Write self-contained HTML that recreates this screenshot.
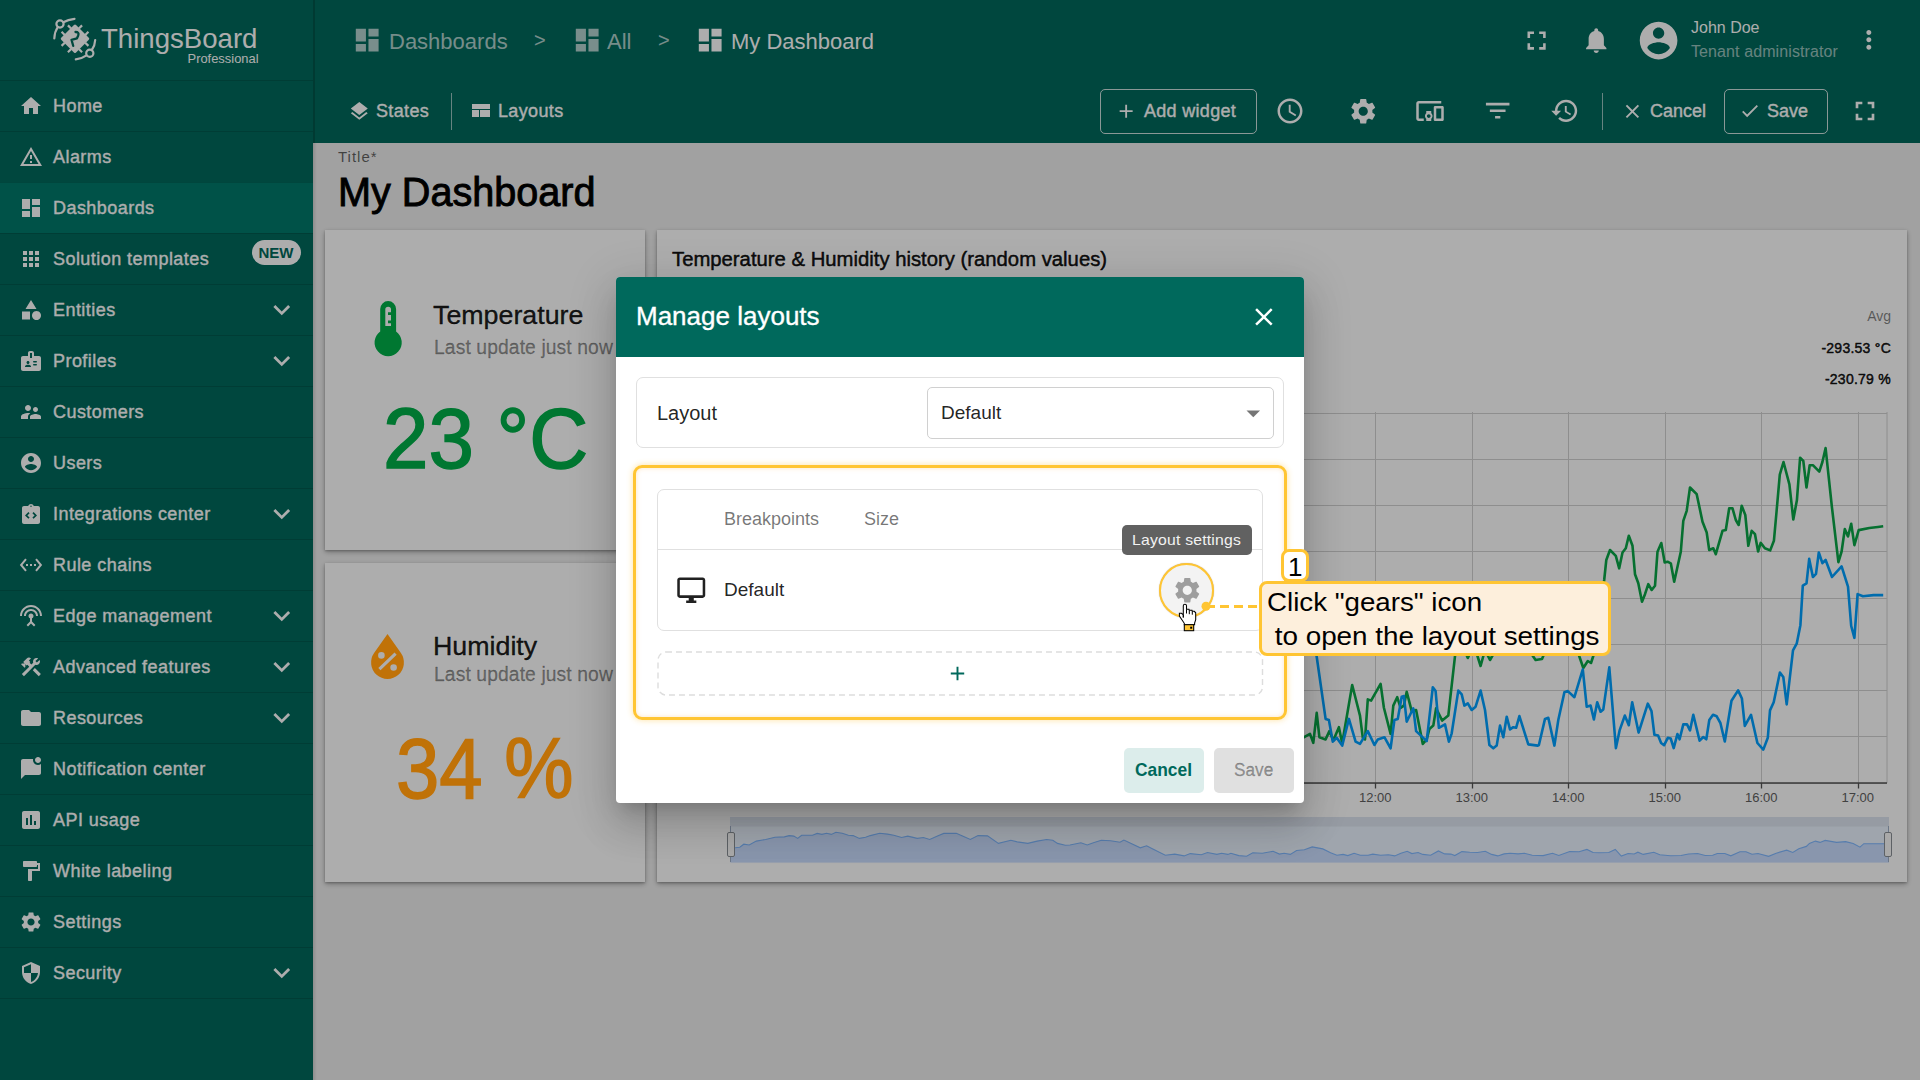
<!DOCTYPE html>
<html><head><meta charset="utf-8">
<style>
*{box-sizing:border-box}
html,body{margin:0;padding:0;width:1920px;height:1080px;overflow:hidden;font-family:"Liberation Sans",sans-serif;background:#eeeeee}
.abs{position:absolute}
svg{display:block}
#sidebar{position:absolute;left:0;top:0;width:313px;height:1080px;background:#00695c}
.mi{position:absolute;left:0;width:313px;height:51px;border-top:1px solid rgba(0,0,0,0.13)}
.mi .ic{position:absolute;left:20px;top:12px;width:24px;height:24px;fill:#fff}
.mi .tx{position:absolute;left:53px;top:14px;font-size:18px;color:#fff;white-space:nowrap;letter-spacing:0.2px}
.mi .chev{position:absolute;left:270px;top:13px;width:26px;height:26px;fill:#fff}
#header{position:absolute;left:313px;top:0;width:1607px;height:143px;background:#00695c}
.wt{color:#fff;white-space:nowrap;position:absolute}
#content{position:absolute;left:313px;top:143px;width:1607px;height:937px;background:#eeeeee}
.card{position:absolute;background:#fff;box-shadow:0 2px 5px rgba(0,0,0,0.3),0 1px 2px rgba(0,0,0,0.2)}
#overlay{position:absolute;left:0;top:0;width:1920px;height:1080px;background:rgba(0,0,0,0.32)}
#dialog{position:absolute;left:616px;top:277px;width:688px;height:526px;background:#fff;border-radius:4px;overflow:hidden;box-shadow:0 11px 15px -7px rgba(0,0,0,.17),0 24px 38px 3px rgba(0,0,0,.12),0 9px 46px 8px rgba(0,0,0,.1)}
</style></head><body>

<div id="sidebar">
<svg class="abs" style="left:0;top:0" width="313" height="80" viewBox="0 0 313 80">
<g fill="none" stroke="#fff" stroke-width="2.2" stroke-linecap="round">
<circle cx="60" cy="24" r="3.6"/>
<path d="M63.3 22.3 Q68 19.5 74.5 18.8"/>
<path d="M57.8 27 Q54.5 32 54.3 38.5"/>
<circle cx="89.8" cy="53.2" r="3.6"/>
<path d="M91.8 50 Q95 45.5 95.2 40"/>
<path d="M86.5 55.3 Q81.5 58.8 75.8 59.3"/>
</g>
<g transform="translate(75,38.8) rotate(45)">
<rect x="-10.5" y="-10.5" width="21" height="21" rx="1.5" fill="#fff"/>
<g stroke="#fff" stroke-width="2.2">
<path d="M-4.5 -10v-4.5 M4.5 -10v-4.5 M-4.5 10v4.5 M4.5 10v4.5 M-10 -4.5h-4.5 M-10 4.5h-4.5 M10 -4.5h4.5 M10 4.5h4.5"/>
</g>
</g>
<path d="M75.5 32 Q79.5 32 78.2 35.5 L77 38.3 L71.5 39.8 L73.2 45.8" fill="none" stroke="#00695c" stroke-width="2.3" stroke-linecap="round" stroke-linejoin="round"/>
<text x="101" y="47.5" font-family="Liberation Sans" font-size="27.6" fill="#fff" style="font-weight:400">ThingsBoard</text>
<text x="258.5" y="62.8" text-anchor="end" font-family="Liberation Sans" font-size="12.9" fill="#fff">Professional</text>
</svg>
<div class="abs" style="left:0;top:80px;width:313px;height:1px;background:rgba(0,0,0,0.14)"></div>
<svg class="abs" style="left:19.0px;top:94.0px" width="24" height="24" viewBox="0 0 24 24"><path fill="#fff" d="M10 20v-6h4v6h5v-8h3L12 3 2 12h3v8z"/></svg>
<div class="abs" style="left:53px;top:96.76px;font-size:18px;line-height:18px;color:#fff;font-weight:400;white-space:nowrap;-webkit-text-stroke:0.35px currentColor;letter-spacing:0.45px">Home</div>
<div class="abs" style="left:0;top:131px;width:313px;height:1px;background:rgba(0,0,0,0.14)"></div>
<svg class="abs" style="left:19.0px;top:145.0px" width="24" height="24" viewBox="0 0 24 24"><path fill="#fff" d="M12 5.99L19.53 19H4.47L12 5.99M12 2L1 21h22L12 2zm1 14h-2v2h2v-2zm0-6h-2v4h2v-4z"/></svg>
<div class="abs" style="left:53px;top:147.76px;font-size:18px;line-height:18px;color:#fff;font-weight:400;white-space:nowrap;-webkit-text-stroke:0.35px currentColor;letter-spacing:0.45px">Alarms</div>
<div class="abs" style="left:0;top:182px;width:313px;height:51px;background:#00796b"></div>
<div class="abs" style="left:0;top:182px;width:313px;height:1px;background:rgba(0,0,0,0.14)"></div>
<svg class="abs" style="left:19.0px;top:196.0px" width="24" height="24" viewBox="0 0 24 24"><path fill="#fff" d="M3 13h8V3H3v10zm0 8h8v-6H3v6zm10 0h8V11h-8v10zm0-18v6h8V3h-8z"/></svg>
<div class="abs" style="left:53px;top:198.76px;font-size:18px;line-height:18px;color:#fff;font-weight:400;white-space:nowrap;-webkit-text-stroke:0.35px currentColor;letter-spacing:0.45px">Dashboards</div>
<div class="abs" style="left:0;top:233px;width:313px;height:1px;background:rgba(0,0,0,0.14)"></div>
<svg class="abs" style="left:19.0px;top:247.0px" width="24" height="24" viewBox="0 0 24 24"><path fill="#fff" d="M4 8h4V4H4v4zm6 12h4v-4h-4v4zm-6 0h4v-4H4v4zm0-6h4v-4H4v4zm6 0h4v-4h-4v4zm6-10v4h4V4h-4zm-6 4h4V4h-4v4zm6 6h4v-4h-4v4zm0 6h4v-4h-4v4z"/></svg>
<div class="abs" style="left:53px;top:249.76px;font-size:18px;line-height:18px;color:#fff;font-weight:400;white-space:nowrap;-webkit-text-stroke:0.35px currentColor;letter-spacing:0.45px">Solution templates</div>
<div class="abs" style="left:251.5px;top:239.5px;width:49px;height:25px;border-radius:13px;background:#fff;color:#00695c;font-size:15px;line-height:25px;font-weight:700;text-align:center">NEW</div>
<div class="abs" style="left:0;top:284px;width:313px;height:1px;background:rgba(0,0,0,0.14)"></div>
<svg class="abs" style="left:19.0px;top:298.0px" width="24" height="24" viewBox="0 0 24 24"><path fill="#fff" d="M12 2l-5.5 9h11z M17.5 13a4.5 4.5 0 1 0 0.001 0z M3 13.5h8v8H3z"/></svg>
<div class="abs" style="left:53px;top:300.76px;font-size:18px;line-height:18px;color:#fff;font-weight:400;white-space:nowrap;-webkit-text-stroke:0.35px currentColor;letter-spacing:0.45px">Entities</div>
<svg class="abs" style="left:265.3px;top:293.3px" width="33.5" height="33.5" viewBox="0 0 24 24"><path fill="#fff" d="M16.59 8.59L12 13.17 7.41 8.59 6 10l6 6 6-6z"/></svg>
<div class="abs" style="left:0;top:335px;width:313px;height:1px;background:rgba(0,0,0,0.14)"></div>
<svg class="abs" style="left:19.0px;top:349.0px" width="24" height="24" viewBox="0 0 24 24"><path fill="#fff" d="M20 7h-5V4c0-1.1-.9-2-2-2h-2c-1.1 0-2 .9-2 2v3H4c-1.1 0-2 .9-2 2v11c0 1.1.9 2 2 2h16c1.1 0 2-.9 2-2V9c0-1.1-.9-2-2-2zM9 12c.83 0 1.5.67 1.5 1.5S9.83 15 9 15s-1.5-.67-1.5-1.5S8.17 12 9 12zm3 6H6v-.43c0-.6.36-1.15.92-1.39.64-.28 1.34-.43 2.08-.43s1.44.15 2.08.43c.55.24.92.78.92 1.39V18zm1-9h-2V4h2v5zm4.25 7.5h-2.5c-.41 0-.75-.34-.75-.75s.34-.75.75-.75h2.5c.41 0 .75.34.75.75s-.34.75-.75.75zm0-3h-2.5c-.41 0-.75-.34-.75-.75s.34-.75.75-.75h2.5c.41 0 .75.34.75.75s-.34.75-.75.75z"/></svg>
<div class="abs" style="left:53px;top:351.76px;font-size:18px;line-height:18px;color:#fff;font-weight:400;white-space:nowrap;-webkit-text-stroke:0.35px currentColor;letter-spacing:0.45px">Profiles</div>
<svg class="abs" style="left:265.3px;top:344.3px" width="33.5" height="33.5" viewBox="0 0 24 24"><path fill="#fff" d="M16.59 8.59L12 13.17 7.41 8.59 6 10l6 6 6-6z"/></svg>
<div class="abs" style="left:0;top:386px;width:313px;height:1px;background:rgba(0,0,0,0.14)"></div>
<svg class="abs" style="left:19.0px;top:400.0px" width="24" height="24" viewBox="0 0 24 24"><path fill="#fff" d="M16.5 12c1.38 0 2.49-1.12 2.49-2.5S17.88 7 16.5 7C15.12 7 14 8.12 14 9.5s1.12 2.5 2.5 2.5zM9 11c1.66 0 2.99-1.34 2.99-3S10.66 5 9 5C7.34 5 6 6.34 6 8s1.34 3 3 3zm7.5 3c-1.83 0-5.5.92-5.5 2.75V19h11v-2.25c0-1.83-3.67-2.75-5.5-2.75zM9 13c-2.33 0-7 1.17-7 3.5V19h7v-2.25c0-.85.33-2.34 2.37-3.47C10.5 13.1 9.66 13 9 13z"/></svg>
<div class="abs" style="left:53px;top:402.76px;font-size:18px;line-height:18px;color:#fff;font-weight:400;white-space:nowrap;-webkit-text-stroke:0.35px currentColor;letter-spacing:0.45px">Customers</div>
<div class="abs" style="left:0;top:437px;width:313px;height:1px;background:rgba(0,0,0,0.14)"></div>
<svg class="abs" style="left:19.0px;top:451.0px" width="24" height="24" viewBox="0 0 24 24"><path fill="#fff" d="M12 2C6.48 2 2 6.48 2 12s4.48 10 10 10 10-4.48 10-10S17.52 2 12 2zm0 3c1.66 0 3 1.34 3 3s-1.34 3-3 3-3-1.34-3-3 1.34-3 3-3zm0 14.2c-2.5 0-4.71-1.28-6-3.22.03-1.99 4-3.08 6-3.08 1.99 0 5.97 1.09 6 3.08-1.29 1.94-3.5 3.22-6 3.22z"/></svg>
<div class="abs" style="left:53px;top:453.76px;font-size:18px;line-height:18px;color:#fff;font-weight:400;white-space:nowrap;-webkit-text-stroke:0.35px currentColor;letter-spacing:0.45px">Users</div>
<div class="abs" style="left:0;top:488px;width:313px;height:1px;background:rgba(0,0,0,0.14)"></div>
<svg class="abs" style="left:19.0px;top:502.0px" width="24" height="24" viewBox="0 0 24 24"><path fill="#fff" d="M19 4h-4.18C14.4 2.84 13.3 2 12 2s-2.4.84-2.82 2H5c-1.1 0-2 .9-2 2v14c0 1.1.9 2 2 2h14c1.1 0 2-.9 2-2V6c0-1.1-.9-2-2-2zM12 3.5c.41 0 .75.34.75.75S12.41 5 12 5s-.75-.34-.75-.75.34-.75.75-.75zM10.6 15.6L9.4 16.8 6 13.4l3.4-3.4 1.2 1.2-2.2 2.2 2.2 2.2zm4 1.2l-1.2-1.2 2.2-2.2-2.2-2.2 1.2-1.2 3.4 3.4-3.4 3.4z"/></svg>
<div class="abs" style="left:53px;top:504.76px;font-size:18px;line-height:18px;color:#fff;font-weight:400;white-space:nowrap;-webkit-text-stroke:0.35px currentColor;letter-spacing:0.45px">Integrations center</div>
<svg class="abs" style="left:265.3px;top:497.3px" width="33.5" height="33.5" viewBox="0 0 24 24"><path fill="#fff" d="M16.59 8.59L12 13.17 7.41 8.59 6 10l6 6 6-6z"/></svg>
<div class="abs" style="left:0;top:539px;width:313px;height:1px;background:rgba(0,0,0,0.14)"></div>
<svg class="abs" style="left:19.0px;top:553.0px" width="24" height="24" viewBox="0 0 24 24"><path fill="#fff" d="M7.77 6.76L6.23 5.48.82 12l5.41 6.52 1.54-1.28L3.42 12l4.35-5.24zM7 13h2v-2H7v2zm10-2h-2v2h2v-2zm-6 2h2v-2h-2v2zm6.77-7.52l-1.54 1.28L20.58 12l-4.35 5.24 1.54 1.28L23.18 12l-5.41-6.52z"/></svg>
<div class="abs" style="left:53px;top:555.76px;font-size:18px;line-height:18px;color:#fff;font-weight:400;white-space:nowrap;-webkit-text-stroke:0.35px currentColor;letter-spacing:0.45px">Rule chains</div>
<div class="abs" style="left:0;top:590px;width:313px;height:1px;background:rgba(0,0,0,0.14)"></div>
<svg class="abs" style="left:19.0px;top:604.0px" width="24" height="24" viewBox="0 0 24 24"><path fill="#fff" d="M12 5c-3.87 0-7 3.13-7 7h2c0-2.76 2.24-5 5-5s5 2.24 5 5h2c0-3.87-3.13-7-7-7zm1 9.29c.88-.39 1.5-1.26 1.5-2.29 0-1.38-1.12-2.5-2.5-2.5S9.5 10.62 9.5 12c0 1.02.62 1.9 1.5 2.29v3.3L7.59 21 9 22.41l3-3 3 3L16.41 21 13 17.59v-3.3zM12 1C5.93 1 1 5.93 1 12h2c0-4.97 4.03-9 9-9s9 4.03 9 9h2c0-6.07-4.93-11-11-11z"/></svg>
<div class="abs" style="left:53px;top:606.76px;font-size:18px;line-height:18px;color:#fff;font-weight:400;white-space:nowrap;-webkit-text-stroke:0.35px currentColor;letter-spacing:0.45px">Edge management</div>
<svg class="abs" style="left:265.3px;top:599.3px" width="33.5" height="33.5" viewBox="0 0 24 24"><path fill="#fff" d="M16.59 8.59L12 13.17 7.41 8.59 6 10l6 6 6-6z"/></svg>
<div class="abs" style="left:0;top:641px;width:313px;height:1px;background:rgba(0,0,0,0.14)"></div>
<svg class="abs" style="left:19.0px;top:655.0px" width="24" height="24" viewBox="0 0 24 24"><path fill="#fff" d="M13.783 15.172l2.121-2.121 5.996 5.996-2.121 2.121zM17.5 10c1.93 0 3.5-1.57 3.5-3.5 0-.58-.16-1.12-.41-1.6l-2.7 2.7-1.49-1.49 2.7-2.7c-.48-.25-1.02-.41-1.6-.41C15.57 3 14 4.57 14 6.5c0 .41.08.8.21 1.16l-1.85 1.85-1.78-1.78.71-.71-1.41-1.41L12 3.49c-1.17-1.17-3.07-1.17-4.24 0L4.22 7.03l1.41 1.41H2.81l-.71.71 3.54 3.54.71-.71V9.15l1.41 1.41.71-.71 1.78 1.78-7.41 7.41 2.12 2.12L16.34 9.79c.36.13.75.21 1.16.21z"/></svg>
<div class="abs" style="left:53px;top:657.76px;font-size:18px;line-height:18px;color:#fff;font-weight:400;white-space:nowrap;-webkit-text-stroke:0.35px currentColor;letter-spacing:0.45px">Advanced features</div>
<svg class="abs" style="left:265.3px;top:650.3px" width="33.5" height="33.5" viewBox="0 0 24 24"><path fill="#fff" d="M16.59 8.59L12 13.17 7.41 8.59 6 10l6 6 6-6z"/></svg>
<div class="abs" style="left:0;top:692px;width:313px;height:1px;background:rgba(0,0,0,0.14)"></div>
<svg class="abs" style="left:19.0px;top:706.0px" width="24" height="24" viewBox="0 0 24 24"><path fill="#fff" d="M10 4H4c-1.1 0-1.99.9-1.99 2L2 18c0 1.1.9 2 2 2h16c1.1 0 2-.9 2-2V8c0-1.1-.9-2-2-2h-8l-2-2z"/></svg>
<div class="abs" style="left:53px;top:708.76px;font-size:18px;line-height:18px;color:#fff;font-weight:400;white-space:nowrap;-webkit-text-stroke:0.35px currentColor;letter-spacing:0.45px">Resources</div>
<svg class="abs" style="left:265.3px;top:701.3px" width="33.5" height="33.5" viewBox="0 0 24 24"><path fill="#fff" d="M16.59 8.59L12 13.17 7.41 8.59 6 10l6 6 6-6z"/></svg>
<div class="abs" style="left:0;top:743px;width:313px;height:1px;background:rgba(0,0,0,0.14)"></div>
<svg class="abs" style="left:19.0px;top:757.0px" width="24" height="24" viewBox="0 0 24 24"><path fill="#fff" d="M22 6.98V16c0 1.1-.9 2-2 2H6l-4 4V4c0-1.1.9-2 2-2h10.1c-.06.32-.1.66-.1 1 0 2.76 2.24 5 5 5 1.13 0 2.16-.39 3-1.02zM16 3c0 1.66 1.34 3 3 3s3-1.34 3-3-1.34-3-3-3-3 1.34-3 3z"/></svg>
<div class="abs" style="left:53px;top:759.76px;font-size:18px;line-height:18px;color:#fff;font-weight:400;white-space:nowrap;-webkit-text-stroke:0.35px currentColor;letter-spacing:0.45px">Notification center</div>
<div class="abs" style="left:0;top:794px;width:313px;height:1px;background:rgba(0,0,0,0.14)"></div>
<svg class="abs" style="left:19.0px;top:808.0px" width="24" height="24" viewBox="0 0 24 24"><path fill="#fff" d="M19 3H5c-1.1 0-2 .9-2 2v14c0 1.1.9 2 2 2h14c1.1 0 2-.9 2-2V5c0-1.1-.9-2-2-2zM9 17H7v-7h2v7zm4 0h-2V7h2v10zm4 0h-2v-4h2v4z"/></svg>
<div class="abs" style="left:53px;top:810.76px;font-size:18px;line-height:18px;color:#fff;font-weight:400;white-space:nowrap;-webkit-text-stroke:0.35px currentColor;letter-spacing:0.45px">API usage</div>
<div class="abs" style="left:0;top:845px;width:313px;height:1px;background:rgba(0,0,0,0.14)"></div>
<svg class="abs" style="left:19.0px;top:859.0px" width="24" height="24" viewBox="0 0 24 24"><path fill="#fff" d="M18 4V3c0-.55-.45-1-1-1H5c-.55 0-1 .45-1 1v4c0 .55.45 1 1 1h12c.55 0 1-.45 1-1V6h1v4H9v11c0 .55.45 1 1 1h2c.55 0 1-.45 1-1v-9h8V4h-3z"/></svg>
<div class="abs" style="left:53px;top:861.76px;font-size:18px;line-height:18px;color:#fff;font-weight:400;white-space:nowrap;-webkit-text-stroke:0.35px currentColor;letter-spacing:0.45px">White labeling</div>
<div class="abs" style="left:0;top:896px;width:313px;height:1px;background:rgba(0,0,0,0.14)"></div>
<svg class="abs" style="left:19.0px;top:910.0px" width="24" height="24" viewBox="0 0 24 24"><path fill="#fff" d="M19.14 12.94c.04-.3.06-.61.06-.94 0-.32-.02-.64-.07-.94l2.03-1.58c.18-.14.23-.41.12-.61l-1.92-3.32c-.12-.22-.37-.29-.59-.22l-2.39.96c-.5-.38-1.03-.7-1.62-.94l-.36-2.54c-.04-.24-.24-.41-.48-.41h-3.84c-.24 0-.43.17-.47.41l-.36 2.54c-.59.24-1.13.57-1.62.94l-2.39-.96c-.22-.08-.47 0-.59.22L2.74 8.87c-.12.21-.08.47.12.61l2.03 1.58c-.05.3-.09.63-.09.94s.02.64.07.94l-2.03 1.58c-.18.14-.23.41-.12.61l1.92 3.32c.12.22.37.29.59.22l2.39-.96c.5.38 1.03.7 1.62.94l.36 2.54c.05.24.24.41.48.41h3.84c.24 0 .44-.17.47-.41l.36-2.54c.59-.24 1.13-.56 1.62-.94l2.39.96c.22.08.47 0 .59-.22l1.92-3.32c.12-.22.07-.47-.12-.61l-2.01-1.58zM12 15.6c-1.98 0-3.6-1.62-3.6-3.6s1.62-3.6 3.6-3.6 3.6 1.62 3.6 3.6-1.62 3.6-3.6 3.6z"/></svg>
<div class="abs" style="left:53px;top:912.76px;font-size:18px;line-height:18px;color:#fff;font-weight:400;white-space:nowrap;-webkit-text-stroke:0.35px currentColor;letter-spacing:0.45px">Settings</div>
<div class="abs" style="left:0;top:947px;width:313px;height:1px;background:rgba(0,0,0,0.14)"></div>
<svg class="abs" style="left:19.0px;top:961.0px" width="24" height="24" viewBox="0 0 24 24"><path fill="#fff" d="M12 1L3 5v6c0 5.55 3.84 10.74 9 12 5.16-1.26 9-6.45 9-12V5l-9-4zm0 10.99h7c-.53 4.12-3.28 7.79-7 8.94V12H5V6.3l7-3.11v8.8z"/></svg>
<div class="abs" style="left:53px;top:963.76px;font-size:18px;line-height:18px;color:#fff;font-weight:400;white-space:nowrap;-webkit-text-stroke:0.35px currentColor;letter-spacing:0.45px">Security</div>
<svg class="abs" style="left:265.3px;top:956.3px" width="33.5" height="33.5" viewBox="0 0 24 24"><path fill="#fff" d="M16.59 8.59L12 13.17 7.41 8.59 6 10l6 6 6-6z"/></svg>
<div class="abs" style="left:0;top:998px;width:313px;height:1px;background:rgba(0,0,0,0.14)"></div>
</div>
<div id="header"></div>
<svg class="abs" style="left:352.2px;top:25.2px" width="30.4" height="30.4" viewBox="0 0 24 24"><path fill="rgba(255,255,255,0.7)" d="M3 13h8V3H3v10zm0 8h8v-6H3v6zm10 0h8V11h-8v10zm0-18v6h8V3h-8z"/></svg>
<div class="abs" style="left:389px;top:31.38px;font-size:22px;line-height:22px;color:rgba(255,255,255,0.7);font-weight:400;white-space:nowrap">Dashboards</div>
<div class="abs" style="left:534px;top:30.07px;font-size:20px;line-height:20px;color:rgba(255,255,255,0.7);font-weight:400;white-space:nowrap">&gt;</div>
<svg class="abs" style="left:571.8px;top:25.2px" width="30.4" height="30.4" viewBox="0 0 24 24"><path fill="rgba(255,255,255,0.7)" d="M3 13h8V3H3v10zm0 8h8v-6H3v6zm10 0h8V11h-8v10zm0-18v6h8V3h-8z"/></svg>
<div class="abs" style="left:607px;top:31.38px;font-size:22px;line-height:22px;color:rgba(255,255,255,0.7);font-weight:400;white-space:nowrap">All</div>
<div class="abs" style="left:658px;top:30.07px;font-size:20px;line-height:20px;color:rgba(255,255,255,0.7);font-weight:400;white-space:nowrap">&gt;</div>
<svg class="abs" style="left:694.8px;top:25.2px" width="30.4" height="30.4" viewBox="0 0 24 24"><path fill="#fff" d="M3 13h8V3H3v10zm0 8h8v-6H3v6zm10 0h8V11h-8v10zm0-18v6h8V3h-8z"/></svg>
<div class="abs" style="left:731px;top:31.38px;font-size:22px;line-height:22px;color:#fff;font-weight:400;white-space:nowrap">My Dashboard</div>
<svg class="abs" style="left:1520.5px;top:24.5px" width="31.2" height="31.2" viewBox="0 0 24 24"><path fill="#fff" d="M7 14H5v5h5v-2H7v-3zm-2-4h2V7h3V5H5v5zm12 7h-3v2h5v-5h-2v3zM14 5v2h3v3h2V5h-5z"/></svg>
<svg class="abs" style="left:1580.9px;top:24.9px" width="30.5" height="30.5" viewBox="0 0 24 24"><path fill="#fff" d="M12 22c1.1 0 2-.9 2-2h-4c0 1.1.89 2 2 2zm6-6v-5c0-3.07-1.64-5.64-4.5-6.32V4c0-.83-.67-1.5-1.5-1.5s-1.5.67-1.5 1.5v.68C7.63 5.36 6 7.92 6 11v5l-2 2v1h16v-1l-2-2z"/></svg>
<svg class="abs" style="left:1636.2px;top:17.9px" width="45.2" height="45.2" viewBox="0 0 24 24"><path fill="#fff" d="M12 2C6.48 2 2 6.48 2 12s4.48 10 10 10 10-4.48 10-10S17.52 2 12 2zm0 3c1.66 0 3 1.34 3 3s-1.34 3-3 3-3-1.34-3-3 1.34-3 3-3zm0 14.2c-2.5 0-4.71-1.28-6-3.22.03-1.99 4-3.08 6-3.08 1.99 0 5.97 1.09 6 3.08-1.29 1.94-3.5 3.22-6 3.22z"/></svg>
<div class="abs" style="left:1691px;top:20.16px;font-size:16px;line-height:16px;color:#fff;font-weight:400;white-space:nowrap;letter-spacing:0px">John Doe</div>
<div class="abs" style="left:1691px;top:43.96px;font-size:16px;line-height:16px;color:rgba(255,255,255,0.6);font-weight:400;white-space:nowrap;letter-spacing:0.1px">Tenant administrator</div>
<svg class="abs" style="left:1854.4px;top:25.0px" width="29.7" height="29.7" viewBox="0 0 24 24"><path fill="#fff" d="M12 8c1.1 0 2-.9 2-2s-.9-2-2-2-2 .9-2 2 .9 2 2 2zm0 2c-1.1 0-2 .9-2 2s.9 2 2 2 2-.9 2-2-.9-2-2-2zm0 6c-1.1 0-2 .9-2 2s.9 2 2 2 2-.9 2-2-.9-2-2-2z"/></svg>
<svg class="abs" style="left:347.6px;top:99.5px" width="22.6" height="22.6" viewBox="0 0 24 24"><path fill="#fff" d="M11.99 18.54l-7.37-5.73L3 14.07l9 7 9-7-1.63-1.27-7.38 5.74zM12 16l7.36-5.73L21 9l-9-7-9 7 1.63 1.27L12 16z"/></svg>
<div class="abs" style="left:376px;top:102.06px;font-size:18px;line-height:18px;color:#fff;font-weight:400;white-space:nowrap;-webkit-text-stroke:0.35px currentColor;letter-spacing:0.35px">States</div>
<div class="abs" style="left:451px;top:93px;width:1px;height:37px;background:rgba(255,255,255,0.6)"></div>
<div class="abs" style="left:472px;top:104px;width:18px;height:5px;background:#fff"></div>
<div class="abs" style="left:472px;top:110px;width:7px;height:7px;background:#fff"></div>
<div class="abs" style="left:480px;top:110px;width:10px;height:7px;background:#fff"></div>
<div class="abs" style="left:498px;top:102.06px;font-size:18px;line-height:18px;color:#fff;font-weight:400;white-space:nowrap;-webkit-text-stroke:0.35px currentColor;letter-spacing:0.35px">Layouts</div>
<div class="abs" style="left:1100px;top:89px;width:157px;height:45px;border:1px solid rgba(255,255,255,0.8);border-radius:5px"></div>
<svg class="abs" style="left:1115.4px;top:99.8px" width="22.3" height="22.3" viewBox="0 0 24 24"><path fill="#fff" d="M19 13h-6v6h-2v-6H5v-2h6V5h2v6h6v2z"/></svg>
<div class="abs" style="left:1144px;top:102.16px;font-size:18px;line-height:18px;color:#fff;font-weight:400;white-space:nowrap;-webkit-text-stroke:0.35px currentColor;letter-spacing:0.3px">Add widget</div>
<svg class="abs" style="left:1275.1px;top:96.3px" width="30" height="30" viewBox="0 0 24 24"><path fill="#fff" d="M11.99 2C6.47 2 2 6.48 2 12s4.47 10 9.99 10C17.52 22 22 17.52 22 12S17.52 2 11.99 2zM12 20c-4.42 0-8-3.58-8-8s3.58-8 8-8 8 3.58 8 8-3.58 8-8 8zm.5-13H11v6l5.25 3.15.75-1.23-4.5-2.67z"/></svg>
<svg class="abs" style="left:1347.6px;top:95.9px" width="30.5" height="30.5" viewBox="0 0 24 24"><path fill="#fff" d="M19.14 12.94c.04-.3.06-.61.06-.94 0-.32-.02-.64-.07-.94l2.03-1.58c.18-.14.23-.41.12-.61l-1.92-3.32c-.12-.22-.37-.29-.59-.22l-2.39.96c-.5-.38-1.03-.7-1.62-.94l-.36-2.54c-.04-.24-.24-.41-.48-.41h-3.84c-.24 0-.43.17-.47.41l-.36 2.54c-.59.24-1.13.57-1.62.94l-2.39-.96c-.22-.08-.47 0-.59.22L2.74 8.87c-.12.21-.08.47.12.61l2.03 1.58c-.05.3-.09.63-.09.94s.02.64.07.94l-2.03 1.58c-.18.14-.23.41-.12.61l1.92 3.32c.12.22.37.29.59.22l2.39-.96c.5.38 1.03.7 1.62.94l.36 2.54c.05.24.24.41.48.41h3.84c.24 0 .44-.17.47-.41l.36-2.54c.59-.24 1.13-.56 1.62-.94l2.39.96c.22.08.47 0 .59-.22l1.92-3.32c.12-.22.07-.47-.12-.61l-2.01-1.58zM12 15.6c-1.98 0-3.6-1.62-3.6-3.6s1.62-3.6 3.6-3.6 3.6 1.62 3.6 3.6-1.62 3.6-3.6 3.6z"/></svg>
<svg class="abs" style="left:1415.1px;top:95.7px" width="30" height="30" viewBox="0 0 24 24"><path fill="#fff" d="M3 6h18V4H3c-1.1 0-2 .9-2 2v12c0 1.1.9 2 2 2h4v-2H3V6zm10 6H9v1.78c-.61.55-1 1.33-1 2.22s.39 1.67 1 2.22V20h4v-1.78c.61-.55 1-1.34 1-2.22s-.39-1.67-1-2.22V12zm-2 5.5c-.83 0-1.5-.67-1.5-1.5s.67-1.5 1.5-1.5 1.5.67 1.5 1.5-.67 1.5-1.5 1.5zM22 8h-6c-.5 0-1 .5-1 1v10c0 .5.5 1 1 1h6c.5 0 1-.5 1-1V9c0-.5-.5-1-1-1zm-1 10h-4v-8h4v8z"/></svg>
<svg class="abs" style="left:1481.7px;top:94.9px" width="31.4" height="31.4" viewBox="0 0 24 24"><path fill="#fff" d="M10 18h4v-2h-4v2zM3 6v2h18V6H3zm3 7h12v-2H6v2z"/></svg>
<svg class="abs" style="left:1550.3px;top:96.0px" width="29.7" height="29.7" viewBox="0 0 24 24"><path fill="#fff" d="M13 3c-4.97 0-9 4.03-9 9H1l3.89 3.89.07.14L9 12H6c0-3.87 3.13-7 7-7s7 3.13 7 7-3.13 7-7 7c-1.93 0-3.68-.79-4.94-2.06l-1.42 1.42C8.27 19.99 10.51 21 13 21c4.97 0 9-4.03 9-9s-4.03-9-9-9zm-1 5v5l4.28 2.54.72-1.21-3.5-2.08V8H12z"/></svg>
<div class="abs" style="left:1602px;top:93px;width:1px;height:37px;background:rgba(255,255,255,0.6)"></div>
<svg class="abs" style="left:1621.0px;top:99.9px" width="22.8" height="22.8" viewBox="0 0 24 24"><path fill="#fff" d="M19 6.41L17.59 5 12 10.59 6.41 5 5 6.41 10.59 12 5 17.59 6.41 19 12 13.41 17.59 19 19 17.59 13.41 12z"/></svg>
<div class="abs" style="left:1650px;top:101.76px;font-size:18px;line-height:18px;color:#fff;font-weight:400;white-space:nowrap;-webkit-text-stroke:0.35px currentColor">Cancel</div>
<div class="abs" style="left:1724px;top:89px;width:104px;height:45px;border:1px solid rgba(255,255,255,0.8);border-radius:5px"></div>
<svg class="abs" style="left:1738.9px;top:100.0px" width="21.7" height="21.7" viewBox="0 0 24 24"><path fill="#fff" d="M9 16.17L4.83 12l-1.42 1.41L9 19 21 7l-1.41-1.41z"/></svg>
<div class="abs" style="left:1767px;top:101.76px;font-size:18px;line-height:18px;color:#fff;font-weight:400;white-space:nowrap;-webkit-text-stroke:0.35px currentColor">Save</div>
<svg class="abs" style="left:1849.0px;top:95.4px" width="32" height="32" viewBox="0 0 24 24"><path fill="#fff" d="M7 14H5v5h5v-2H7v-3zm-2-4h2V7h3V5H5v5zm12 7h-3v2h5v-5h-2v3zM14 5v2h3v3h2V5h-5z"/></svg>
<div id="content"></div>
<div class="abs" style="left:313px;top:0;width:1.5px;height:143px;background:rgba(0,0,0,0.18)"></div>
<div class="abs" style="left:313px;top:143px;width:4px;height:937px;background:linear-gradient(90deg,rgba(0,0,0,0.12),rgba(0,0,0,0))"></div>
<div class="abs" style="left:338px;top:149.30px;font-size:15px;line-height:15px;color:rgba(0,0,0,0.6);font-weight:400;white-space:nowrap;letter-spacing:1px">Title*</div>
<div class="abs" style="left:338px;top:171.84px;font-size:40px;line-height:40px;color:#000;font-weight:400;white-space:nowrap;transform:scaleX(0.99);transform-origin:0 0;-webkit-text-stroke:0.9px #000">My Dashboard</div>

<div class="card" style="left:325px;top:230px;width:320px;height:320px"></div>
<div class="card" style="left:325px;top:563px;width:320px;height:319px"></div>
<div class="card" style="left:657px;top:230px;width:1250px;height:652px"></div>
<svg class="abs" style="left:0;top:0" width="1920" height="1080"><path fill="#00b049" fill-rule="evenodd" d="M380.2 309A7.95 7.95 0 0 1 396.1 309V331.5A13.6 13.6 0 1 1 380.2 331.5Z M385.3 309.5A2.85 2.85 0 0 1 391 309.5V312.2H388V314.9H391V320.6H388V323.3H391V326H385.3Z"/></svg><div class="abs" style="left:433px;top:302.39px;font-size:26px;line-height:26px;color:rgba(0,0,0,0.9);font-weight:400;white-space:nowrap;transform:scaleX(1.03);transform-origin:0 0;-webkit-text-stroke:0.35px currentColor">Temperature</div><div class="abs" style="left:434px;top:336.87px;font-size:20px;line-height:20px;color:rgba(0,0,0,0.42);font-weight:400;white-space:nowrap;transform:scaleX(0.965);transform-origin:0 0;-webkit-text-stroke:0.3px currentColor;letter-spacing:0.1px">Last update just now</div><div class="abs" style="left:382.5px;top:394.70px;font-size:86px;line-height:86px;color:#00b049;font-weight:400;white-space:nowrap;transform:scaleX(0.95);transform-origin:0 0;-webkit-text-stroke:1.5px #00b049">23 °C</div><svg class="abs" style="left:0;top:0;z-index:5" width="1920" height="1080"><path fill="#c07208" fill-rule="evenodd" d="M387.5 634L374.08 653.07A16.4 16.4 0 1 0 400.92 653.07Z M381.4 655.4m-3.3 0a3.3 3.3 0 1 0 6.6 0a3.3 3.3 0 1 0 -6.6 0Z M393.6 667.5m-3.3 0a3.3 3.3 0 1 0 6.6 0a3.3 3.3 0 1 0 -6.6 0Z M378.3 668.1L394.5 652.5L396.7 654.7L380.5 670.3Z"/></svg><div class="abs" style="left:433px;top:632.59px;font-size:26px;line-height:26px;color:rgba(0,0,0,0.9);font-weight:400;white-space:nowrap;transform:scaleX(1.03);transform-origin:0 0;-webkit-text-stroke:0.35px currentColor">Humidity</div><div class="abs" style="left:434px;top:663.57px;font-size:20px;line-height:20px;color:rgba(0,0,0,0.42);font-weight:400;white-space:nowrap;transform:scaleX(0.965);transform-origin:0 0;-webkit-text-stroke:0.3px currentColor;letter-spacing:0.1px">Last update just now</div><div class="abs" style="left:396px;top:725.40px;font-size:86px;line-height:86px;color:#c07208;font-weight:400;white-space:nowrap;transform:scaleX(0.905);transform-origin:0 0;-webkit-text-stroke:1.5px #c07208;z-index:5">34 %</div><div class="abs" style="left:672px;top:249.27px;font-size:20px;line-height:20px;color:rgba(0,0,0,0.92);font-weight:400;white-space:nowrap;transform:scaleX(1.014);transform-origin:0 0;-webkit-text-stroke:0.5px currentColor">Temperature &amp; Humidity history (random values)</div><div class="abs" style="right:29px;top:308.90px;font-size:14px;line-height:14px;color:rgba(0,0,0,0.5);font-weight:400;white-space:nowrap">Avg</div><div class="abs" style="right:29px;top:340.95px;font-size:14px;line-height:14px;color:rgba(0,0,0,0.9);font-weight:400;white-space:nowrap;-webkit-text-stroke:0.5px currentColor;letter-spacing:0.25px">-293.53 °C</div><div class="abs" style="right:29px;top:371.75px;font-size:14px;line-height:14px;color:rgba(0,0,0,0.9);font-weight:400;white-space:nowrap;-webkit-text-stroke:0.5px currentColor;letter-spacing:0.25px">-230.79 %</div><svg class="abs" style="left:0;top:0" width="1920" height="1080" viewBox="0 0 1920 1080">
<path d="M730 413.5H1887" stroke="#d2d2d2" stroke-width="1"/><path d="M730 459.5H1887" stroke="#d2d2d2" stroke-width="1"/><path d="M730 505.5H1887" stroke="#d2d2d2" stroke-width="1"/><path d="M730 551.5H1887" stroke="#d2d2d2" stroke-width="1"/><path d="M730 598.5H1887" stroke="#d2d2d2" stroke-width="1"/><path d="M730 644.5H1887" stroke="#d2d2d2" stroke-width="1"/><path d="M730 690.5H1887" stroke="#d2d2d2" stroke-width="1"/><path d="M730 736.5H1887" stroke="#d2d2d2" stroke-width="1"/><path d="M730 783.5H1887" stroke="#d2d2d2" stroke-width="1"/><path d="M796.5 412V783" stroke="#d2d2d2" stroke-width="1"/><path d="M893.5 412V783" stroke="#d2d2d2" stroke-width="1"/><path d="M989.5 412V783" stroke="#d2d2d2" stroke-width="1"/><path d="M1086.5 412V783" stroke="#d2d2d2" stroke-width="1"/><path d="M1182.5 412V783" stroke="#d2d2d2" stroke-width="1"/><path d="M1279.5 412V783" stroke="#d2d2d2" stroke-width="1"/><path d="M1375.5 412V783" stroke="#d2d2d2" stroke-width="1"/><path d="M1472.5 412V783" stroke="#d2d2d2" stroke-width="1"/><path d="M1568.5 412V783" stroke="#d2d2d2" stroke-width="1"/><path d="M1665.5 412V783" stroke="#d2d2d2" stroke-width="1"/><path d="M1761.5 412V783" stroke="#d2d2d2" stroke-width="1"/><path d="M1858.5 412V783" stroke="#d2d2d2" stroke-width="1"/><path d="M1887 412V783" stroke="#d2d2d2" stroke-width="1"/><path d="M730 783H1887" stroke="#555" stroke-width="1.3"/><path d="M796.5 783V788.5" stroke="#555" stroke-width="1.3"/><path d="M893.5 783V788.5" stroke="#555" stroke-width="1.3"/><path d="M989.5 783V788.5" stroke="#555" stroke-width="1.3"/><path d="M1086.5 783V788.5" stroke="#555" stroke-width="1.3"/><path d="M1182.5 783V788.5" stroke="#555" stroke-width="1.3"/><path d="M1279.5 783V788.5" stroke="#555" stroke-width="1.3"/><path d="M1375.5 783V788.5" stroke="#555" stroke-width="1.3"/><path d="M1472.5 783V788.5" stroke="#555" stroke-width="1.3"/><path d="M1568.5 783V788.5" stroke="#555" stroke-width="1.3"/><path d="M1665.5 783V788.5" stroke="#555" stroke-width="1.3"/><path d="M1761.5 783V788.5" stroke="#555" stroke-width="1.3"/><path d="M1858.5 783V788.5" stroke="#555" stroke-width="1.3"/>
<text x="1375.2" y="802" text-anchor="middle" font-family="Liberation Sans" font-size="13" fill="#616161">12:00</text><text x="1471.7" y="802" text-anchor="middle" font-family="Liberation Sans" font-size="13" fill="#616161">13:00</text><text x="1568.2" y="802" text-anchor="middle" font-family="Liberation Sans" font-size="13" fill="#616161">14:00</text><text x="1664.7" y="802" text-anchor="middle" font-family="Liberation Sans" font-size="13" fill="#616161">15:00</text><text x="1761.2" y="802" text-anchor="middle" font-family="Liberation Sans" font-size="13" fill="#616161">16:00</text><text x="1857.7" y="802" text-anchor="middle" font-family="Liberation Sans" font-size="13" fill="#616161">17:00</text>
<path d="M1290.0 735.0 L1304.2 737.2 L1310.0 733.9 L1313.3 742.8 L1316.7 712.8 L1319.4 737.2 L1325.6 739.4 L1329.4 731.1 L1333.3 740.6 L1338.9 727.2 L1342.2 743.3 L1352.2 685.0 L1360.0 715.6 L1362.8 737.8 L1365.0 739.4 L1367.8 699.4 L1371.1 700.6 L1380.6 683.9 L1383.9 707.8 L1390.6 733.9 L1393.3 705.6 L1397.2 697.2 L1400.6 707.8 L1403.9 705.6 L1406.7 691.7 L1411.7 711.1 L1416.1 710.0 L1422.8 743.9 L1426.7 739.4 L1429.4 728.9 L1433.3 725.6 L1436.1 708.3 L1442.2 720.6 L1448.3 715.6 L1455.0 656.1 L1460.0 640.0 L1467.8 658.0 L1474.0 645.0 L1480.6 666.0 L1485.0 650.0 L1490.0 660.0 L1500.0 642.0 L1512.0 650.0 L1522.0 640.0 L1535.6 660.0 L1542.0 659.0 L1550.0 640.0 L1562.0 648.0 L1572.0 635.0 L1583.3 668.0 L1587.8 661.0 L1591.0 663.0 L1593.3 656.0 L1600.0 610.0 L1604.2 580.0 L1606.3 560.0 L1610.0 550.0 L1615.8 555.8 L1619.2 568.3 L1622.5 552.5 L1625.8 548.3 L1628.8 535.8 L1632.5 545.8 L1635.0 574.2 L1638.3 583.3 L1642.0 601.7 L1645.0 594.2 L1648.3 584.2 L1651.7 590.0 L1655.0 585.8 L1657.5 551.7 L1661.3 543.0 L1664.7 562.5 L1667.5 561.7 L1670.8 563.3 L1674.2 581.7 L1680.8 551.7 L1683.3 520.8 L1686.7 510.8 L1690.0 487.5 L1696.7 494.2 L1702.5 521.7 L1706.7 532.5 L1709.2 550.0 L1713.3 548.3 L1715.8 554.2 L1722.5 530.8 L1725.8 530.0 L1729.2 508.3 L1732.5 508.3 L1735.8 520.0 L1738.7 525.0 L1741.7 505.8 L1745.3 515.0 L1748.3 545.8 L1751.7 530.8 L1755.0 534.2 L1758.1 551.5 L1760.7 542.9 L1764.9 548.3 L1770.2 550.4 L1773.9 540.8 L1776.6 511.0 L1779.8 474.7 L1783.5 462.0 L1789.4 484.3 L1793.3 519.5 L1796.9 500.3 L1800.1 457.7 L1803.3 460.9 L1806.5 487.5 L1809.7 465.2 L1812.9 465.2 L1819.3 471.6 L1822.4 462.0 L1825.6 448.1 L1832.0 507.8 L1838.4 562.1 L1841.6 551.5 L1844.8 529.1 L1848.0 536.5 L1851.2 523.8 L1854.4 545.1 L1858.7 530.1 L1869.3 528.0 L1877.9 527.0 L1883.2 526.3" fill="none" stroke="#0aa547" stroke-width="2.6" stroke-linejoin="round"/>
<path d="M1300.0 600.0 L1310.0 630.0 L1316.7 656.7 L1325.6 718.9 L1328.9 720.0 L1332.8 741.7 L1336.7 737.8 L1342.2 745.6 L1348.9 718.9 L1355.6 741.7 L1360.0 743.9 L1367.8 731.1 L1374.4 745.0 L1377.8 739.4 L1384.4 737.2 L1390.6 748.3 L1394.4 720.0 L1397.8 718.9 L1401.7 696.7 L1403.9 696.1 L1406.7 721.7 L1413.3 708.3 L1416.1 731.1 L1426.7 741.1 L1432.8 687.2 L1435.6 691.1 L1438.9 727.8 L1445.0 724.4 L1448.9 741.7 L1451.7 733.3 L1458.3 690.6 L1461.7 694.4 L1464.4 705.6 L1467.8 703.3 L1471.7 710.0 L1475.6 706.7 L1480.6 690.6 L1485.0 710.0 L1489.4 745.0 L1493.3 748.3 L1496.7 745.6 L1500.0 725.6 L1503.3 737.2 L1506.7 716.7 L1510.0 729.4 L1513.3 727.2 L1516.1 727.8 L1519.4 716.1 L1528.3 744.4 L1537.8 745.6 L1538.9 745.0 L1545.0 718.9 L1548.3 717.8 L1554.4 745.6 L1558.3 720.0 L1564.4 692.2 L1567.8 691.1 L1574.4 697.2 L1582.8 669.4 L1586.7 706.7 L1590.6 705.6 L1593.9 719.4 L1597.2 702.2 L1600.6 711.7 L1603.3 709.4 L1609.3 667.4 L1615.9 748.1 L1619.6 730.4 L1624.8 715.6 L1628.8 725.2 L1632.2 702.2 L1638.6 732.6 L1647.8 703.7 L1651.5 711.1 L1654.4 734.8 L1658.1 735.6 L1661.1 743.0 L1664.1 745.2 L1667.8 737.8 L1670.7 738.5 L1673.7 748.1 L1677.4 734.1 L1679.6 739.3 L1683.3 724.4 L1687.0 724.4 L1690.0 730.4 L1693.3 714.8 L1699.6 740.7 L1703.3 737.0 L1706.3 739.3 L1709.3 720.0 L1713.0 714.8 L1716.7 716.3 L1720.4 723.0 L1724.8 741.5 L1731.5 700.7 L1738.1 690.4 L1741.9 698.5 L1744.8 725.9 L1751.0 714.8 L1757.4 743.0 L1763.3 749.6 L1767.8 737.8 L1770.0 710.4 L1773.7 702.2 L1779.9 672.6 L1783.3 677.0 L1786.7 704.4 L1793.0 650.4 L1796.7 643.7 L1800.4 625.2 L1802.8 585.6 L1806.5 583.4 L1809.2 558.9 L1812.9 577.0 L1816.0 573.8 L1818.8 552.5 L1822.4 563.2 L1825.6 560.0 L1832.0 577.0 L1841.6 566.4 L1848.0 586.6 L1851.2 626.0 L1854.4 637.8 L1857.6 594.1 L1862.9 596.2 L1873.6 595.1 L1883.2 595.1" fill="none" stroke="#00a0ff" stroke-width="2.6" stroke-linejoin="round"/>
<rect x="730" y="817" width="1159" height="45.5" fill="#ebf3ff"/>
<rect x="730" y="817" width="1159" height="9.5" fill="#dde5f0"/>
<path d="M730.5 848.0 L735.2 847.8 L739.8 847.3 L743.8 844.2 L749.2 845.0 L756.3 841.1 L765.6 839.5 L775.0 837.2 L784.4 836.9 L789.1 835.6 L793.8 836.1 L797.7 838.4 L801.6 835.3 L812.5 835.3 L817.2 833.4 L821.9 834.4 L826.6 833.3 L831.3 834.4 L835.9 832.2 L842.2 833.3 L848.4 835.2 L853.1 835.6 L859.4 838.4 L865.6 837.2 L870.3 835.6 L879.7 833.3 L887.5 834.1 L893.8 835.3 L901.6 837.5 L907.8 836.1 L917.2 838.4 L923.4 837.5 L929.7 839.5 L937.5 835.9 L943.8 833.4 L956.3 833.3 L962.5 836.1 L970.3 839.5 L978.1 835.6 L987.5 835.9 L998.4 843.4 L1010.9 840.3 L1017.2 841.9 L1027.8 843.4 L1037.2 841.1 L1046.6 839.5 L1052.8 840.3 L1057.5 843.4 L1065.3 845.3 L1070.0 845.0 L1080.9 842.7 L1087.2 845.0 L1093.4 842.7 L1101.3 840.3 L1110.6 840.8 L1120.0 842.2 L1123.9 840.0 L1140.3 847.8 L1146.6 845.8 L1152.8 848.9 L1165.3 855.2 L1174.7 854.1 L1184.1 855.9 L1190.3 853.6 L1201.3 854.7 L1207.5 852.5 L1216.9 854.4 L1221.6 853.3 L1227.8 854.4 L1230.9 853.3 L1238.8 855.6 L1246.6 856.3 L1252.8 852.8 L1262.2 853.3 L1273.1 851.3 L1279.4 854.1 L1284.1 853.3 L1290.3 854.4 L1296.6 850.5 L1304.4 849.7 L1312.2 846.9 L1322.8 848.9 L1330.6 852.8 L1336.9 855.2 L1343.1 854.4 L1347.8 855.6 L1354.1 853.3 L1360.3 855.2 L1368.1 855.2 L1372.8 854.1 L1380.6 855.2 L1388.4 854.7 L1394.7 855.9 L1400.9 853.3 L1407.2 851.3 L1411.9 853.6 L1418.1 852.5 L1422.8 854.4 L1430.6 855.2 L1438.4 850.9 L1444.7 853.9 L1450.9 854.1 L1454.8 855.6 L1461.9 851.6 L1469.7 852.3 L1477.5 852.5 L1485.3 851.3 L1491.6 854.4 L1497.8 855.9 L1504.1 853.9 L1510.3 853.3 L1518.1 853.9 L1524.4 853.3 L1532.2 855.2 L1543.1 855.6 L1552.5 853.3 L1558.8 855.5 L1569.7 851.6 L1579.1 851.7 L1586.9 849.4 L1593.1 852.5 L1599.4 852.8 L1608.8 852.5 L1615.3 849.5 L1621.3 856.0 L1628.1 853.5 L1634.2 854.0 L1637.9 852.2 L1643.2 854.4 L1653.8 852.2 L1659.8 854.7 L1670.4 855.8 L1681.0 855.5 L1688.5 854.0 L1697.6 853.5 L1705.2 855.5 L1712.7 855.2 L1717.3 853.5 L1724.8 853.5 L1730.8 855.8 L1739.9 851.7 L1746.0 851.7 L1752.0 854.3 L1758.0 853.5 L1768.6 856.3 L1776.2 853.2 L1786.7 850.2 L1792.8 852.5 L1798.8 848.7 L1806.4 846.4 L1809.4 843.4 L1815.4 841.1 L1820.0 842.4 L1825.2 840.4 L1836.6 842.4 L1845.6 841.6 L1853.2 843.4 L1860.0 847.2 L1863.8 843.7 L1884.2 843.7 L1889 843.7 L1889 862.5 L730.5 862.5Z" fill="#cadeff" stroke="none"/>
<path d="M730.5 848.0 L735.2 847.8 L739.8 847.3 L743.8 844.2 L749.2 845.0 L756.3 841.1 L765.6 839.5 L775.0 837.2 L784.4 836.9 L789.1 835.6 L793.8 836.1 L797.7 838.4 L801.6 835.3 L812.5 835.3 L817.2 833.4 L821.9 834.4 L826.6 833.3 L831.3 834.4 L835.9 832.2 L842.2 833.3 L848.4 835.2 L853.1 835.6 L859.4 838.4 L865.6 837.2 L870.3 835.6 L879.7 833.3 L887.5 834.1 L893.8 835.3 L901.6 837.5 L907.8 836.1 L917.2 838.4 L923.4 837.5 L929.7 839.5 L937.5 835.9 L943.8 833.4 L956.3 833.3 L962.5 836.1 L970.3 839.5 L978.1 835.6 L987.5 835.9 L998.4 843.4 L1010.9 840.3 L1017.2 841.9 L1027.8 843.4 L1037.2 841.1 L1046.6 839.5 L1052.8 840.3 L1057.5 843.4 L1065.3 845.3 L1070.0 845.0 L1080.9 842.7 L1087.2 845.0 L1093.4 842.7 L1101.3 840.3 L1110.6 840.8 L1120.0 842.2 L1123.9 840.0 L1140.3 847.8 L1146.6 845.8 L1152.8 848.9 L1165.3 855.2 L1174.7 854.1 L1184.1 855.9 L1190.3 853.6 L1201.3 854.7 L1207.5 852.5 L1216.9 854.4 L1221.6 853.3 L1227.8 854.4 L1230.9 853.3 L1238.8 855.6 L1246.6 856.3 L1252.8 852.8 L1262.2 853.3 L1273.1 851.3 L1279.4 854.1 L1284.1 853.3 L1290.3 854.4 L1296.6 850.5 L1304.4 849.7 L1312.2 846.9 L1322.8 848.9 L1330.6 852.8 L1336.9 855.2 L1343.1 854.4 L1347.8 855.6 L1354.1 853.3 L1360.3 855.2 L1368.1 855.2 L1372.8 854.1 L1380.6 855.2 L1388.4 854.7 L1394.7 855.9 L1400.9 853.3 L1407.2 851.3 L1411.9 853.6 L1418.1 852.5 L1422.8 854.4 L1430.6 855.2 L1438.4 850.9 L1444.7 853.9 L1450.9 854.1 L1454.8 855.6 L1461.9 851.6 L1469.7 852.3 L1477.5 852.5 L1485.3 851.3 L1491.6 854.4 L1497.8 855.9 L1504.1 853.9 L1510.3 853.3 L1518.1 853.9 L1524.4 853.3 L1532.2 855.2 L1543.1 855.6 L1552.5 853.3 L1558.8 855.5 L1569.7 851.6 L1579.1 851.7 L1586.9 849.4 L1593.1 852.5 L1599.4 852.8 L1608.8 852.5 L1615.3 849.5 L1621.3 856.0 L1628.1 853.5 L1634.2 854.0 L1637.9 852.2 L1643.2 854.4 L1653.8 852.2 L1659.8 854.7 L1670.4 855.8 L1681.0 855.5 L1688.5 854.0 L1697.6 853.5 L1705.2 855.5 L1712.7 855.2 L1717.3 853.5 L1724.8 853.5 L1730.8 855.8 L1739.9 851.7 L1746.0 851.7 L1752.0 854.3 L1758.0 853.5 L1768.6 856.3 L1776.2 853.2 L1786.7 850.2 L1792.8 852.5 L1798.8 848.7 L1806.4 846.4 L1809.4 843.4 L1815.4 841.1 L1820.0 842.4 L1825.2 840.4 L1836.6 842.4 L1845.6 841.6 L1853.2 843.4 L1860.0 847.2 L1863.8 843.7 L1884.2 843.7 L1889 843.7" fill="none" stroke="#80b8ff" stroke-width="1.1"/>
<path d="M730.5 826V862" stroke="#a0b0c8" stroke-width="1"/><rect x="727.5" y="832.5" width="7" height="24" rx="1.5" fill="#fafafa" stroke="#8a8f96" stroke-width="1"/>
<path d="M1888.5 826V862" stroke="#a0b0c8" stroke-width="1"/><rect x="1884.5" y="832.5" width="7" height="24" rx="1.5" fill="#fafafa" stroke="#8a8f96" stroke-width="1"/>
</svg>
<div id="overlay"></div>
<div id="dialog"></div><div class="abs" style="left:616px;top:277px;width:688px;height:80px;background:#00695c;border-radius:4px 4px 0 0"></div><div class="abs" style="left:636px;top:302.99px;font-size:26px;line-height:26px;color:#fff;font-weight:400;white-space:nowrap;-webkit-text-stroke:0.35px currentColor">Manage layouts</div><svg class="abs" style="left:1248.8px;top:302.4px" width="29.8" height="29.8" viewBox="0 0 24 24"><path fill="#fff" d="M19 6.41L17.59 5 12 10.59 6.41 5 5 6.41 10.59 12 5 17.59 6.41 19 12 13.41 17.59 19 19 17.59 13.41 12z"/></svg><div class="abs" style="left:636px;top:377px;width:648px;height:71px;border:1px solid #e0e0e0;border-radius:7px"></div><div class="abs" style="left:657px;top:403.07px;font-size:20px;line-height:20px;color:rgba(0,0,0,0.87);font-weight:400;white-space:nowrap">Layout</div><div class="abs" style="left:927px;top:387px;width:347px;height:52px;border:1px solid #d0d0d0;border-radius:5px"></div><div class="abs" style="left:941px;top:403.22px;font-size:19px;line-height:19px;color:rgba(0,0,0,0.87);font-weight:400;white-space:nowrap">Default</div><svg class="abs" style="left:1236.5px;top:397.2px" width="32.6" height="32.6" viewBox="0 0 24 24"><path fill="rgba(0,0,0,0.54)" d="M7 10l5 5 5-5z"/></svg><div class="abs" style="left:633px;top:465px;width:654px;height:255px;border:3px solid #ffc533;border-radius:9px;box-shadow:0 0 6px rgba(252,191,47,0.45),inset 0 0 5px rgba(252,180,90,0.35)"></div><div class="abs" style="left:657px;top:489px;width:606px;height:142px;border:1px solid #e0e0e0;border-radius:7px"></div><div class="abs" style="left:658px;top:549px;width:604px;height:1px;background:#e0e0e0"></div><div class="abs" style="left:724px;top:510.26px;font-size:18px;line-height:18px;color:rgba(0,0,0,0.54);font-weight:400;white-space:nowrap">Breakpoints</div><div class="abs" style="left:864px;top:510.26px;font-size:18px;line-height:18px;color:rgba(0,0,0,0.54);font-weight:400;white-space:nowrap">Size</div><svg class="abs" style="left:676.0px;top:575.0px" width="30.5" height="30.5" viewBox="0 0 24 24"><path fill="rgba(0,0,0,0.87)" d="M21 2H3c-1.1 0-2 .9-2 2v12c0 1.1.9 2 2 2h7v2H8v2h8v-2h-2v-2h7c1.1 0 2-.9 2-2V4c0-1.1-.9-2-2-2zm0 14H3V4h18v12z"/></svg><div class="abs" style="left:724px;top:580.22px;font-size:19px;line-height:19px;color:rgba(0,0,0,0.87);font-weight:400;white-space:nowrap">Default</div><svg class="abs" style="left:0;top:0" width="1920" height="1080"><rect x="658" y="652" width="604.5" height="43" rx="8" fill="none" stroke="#dddddd" stroke-width="1.4" stroke-dasharray="6 4"/></svg><svg class="abs" style="left:945.5px;top:662.0px" width="23" height="23" viewBox="0 0 24 24"><path fill="#00695c" d="M19 13h-6v6h-2v-6H5v-2h6V5h2v6h6v2z"/></svg><div class="abs" style="left:1122px;top:525px;width:130px;height:30px;background:#616161;border-radius:5px"></div><div class="abs" style="left:1132px;top:532.30px;font-size:15px;line-height:15px;color:#f2f2f2;font-weight:400;white-space:nowrap;transform:scaleX(1.05);transform-origin:0 0;letter-spacing:0.2px">Layout settings</div><div class="abs" style="left:1159px;top:562.5px;width:55px;height:55px;border:2.6px solid #ffc533;border-radius:50%;background:#f3f3f3;box-shadow:0 0 1px rgba(120,80,0,0.5)"></div><svg class="abs" style="left:1171.7px;top:574.7px" width="30.6" height="30.6" viewBox="0 0 24 24"><path fill="#9e9e9e" d="M19.14 12.94c.04-.3.06-.61.06-.94 0-.32-.02-.64-.07-.94l2.03-1.58c.18-.14.23-.41.12-.61l-1.92-3.32c-.12-.22-.37-.29-.59-.22l-2.39.96c-.5-.38-1.03-.7-1.62-.94l-.36-2.54c-.04-.24-.24-.41-.48-.41h-3.84c-.24 0-.43.17-.47.41l-.36 2.54c-.59.24-1.13.57-1.62.94l-2.39-.96c-.22-.08-.47 0-.59.22L2.74 8.87c-.12.21-.08.47.12.61l2.03 1.58c-.05.3-.09.63-.09.94s.02.64.07.94l-2.03 1.58c-.18.14-.23.41-.12.61l1.92 3.32c.12.22.37.29.59.22l2.39-.96c.5.38 1.03.7 1.62.94l.36 2.54c.05.24.24.41.48.41h3.84c.24 0 .44-.17.47-.41l.36-2.54c.59-.24 1.13-.56 1.62-.94l2.39.96c.22.08.47 0 .59-.22l1.92-3.32c.12-.22.07-.47-.12-.61l-2.01-1.58zM12 15.6c-1.98 0-3.6-1.62-3.6-3.6s1.62-3.6 3.6-3.6 3.6 1.62 3.6 3.6-1.62 3.6-3.6 3.6z"/></svg><div class="abs" style="left:1124px;top:748px;width:80px;height:45px;background:#dcedeb;border-radius:5px"></div><div class="abs" style="left:1135px;top:761.34px;font-size:18.5px;line-height:18.5px;color:#00695c;font-weight:700;white-space:nowrap;transform:scaleX(0.94);transform-origin:0 0">Cancel</div><div class="abs" style="left:1214px;top:748px;width:80px;height:45px;background:#e0e0e0;border-radius:5px"></div><div class="abs" style="left:1234px;top:761.34px;font-size:18.5px;line-height:18.5px;color:rgba(0,0,0,0.36);font-weight:400;white-space:nowrap;transform:scaleX(0.93);transform-origin:0 0;-webkit-text-stroke:0.35px currentColor">Save</div>
<svg class="abs" style="left:0;top:0" width="1920" height="1080">
<path d="M1183.3 617.5V605.8Q1183.3 604.3 1184.9 604.3Q1186.5 604.3 1186.5 605.8V609.3H1189L1189.3 610.3H1192L1192.3 611.3H1194.3L1195.7 612.8V619.7L1194.6 623V624.7H1184.3V623.3L1179.4 616V613.3H1181.5L1183.3 614.8Z" fill="#fff" stroke="#000" stroke-width="1.05" stroke-linejoin="miter"/>
<path d="M1186.5 609.3V613.5M1189.3 610.3V614.2M1192.3 611.3V614.7M1183.3 614.8V617.5" stroke="#000" stroke-width="1" fill="none"/>
<rect x="1184.3" y="624.7" width="9.4" height="6" fill="#ffc533" stroke="#000" stroke-width="1.05"/>
<rect x="1190.2" y="626.7" width="2" height="2" fill="#000"/>
</svg><svg class="abs" style="left:0;top:0" width="1920" height="1080"><path d="M1206 606.5H1262" stroke="#ffc533" stroke-width="3" stroke-dasharray="9 5"/><circle cx="1206" cy="606.3" r="4.5" fill="#ffc533"/></svg><div class="abs" style="left:1259px;top:580.5px;width:352px;height:75.5px;border:3px solid #ffc533;border-radius:8px;background:#fdefdc"></div><div class="abs" style="left:1267px;top:588.99px;font-size:26px;line-height:26px;color:#000;font-weight:400;white-space:nowrap;transform:scaleX(1.065);transform-origin:0 0">Click "gears" icon</div><div class="abs" style="left:1267px;top:622.99px;font-size:26px;line-height:26px;color:#000;font-weight:400;white-space:nowrap;transform:scaleX(1.07);transform-origin:0 0">&nbsp;to open the layout settings</div><div class="abs" style="left:1281px;top:548.7px;width:28px;height:33px;border:3px solid #ffc533;border-radius:8px;background:#fff"></div><div class="abs" style="left:1288px;top:553.59px;font-size:26px;line-height:26px;color:#000;font-weight:400;white-space:nowrap">1</div>
</body></html>
